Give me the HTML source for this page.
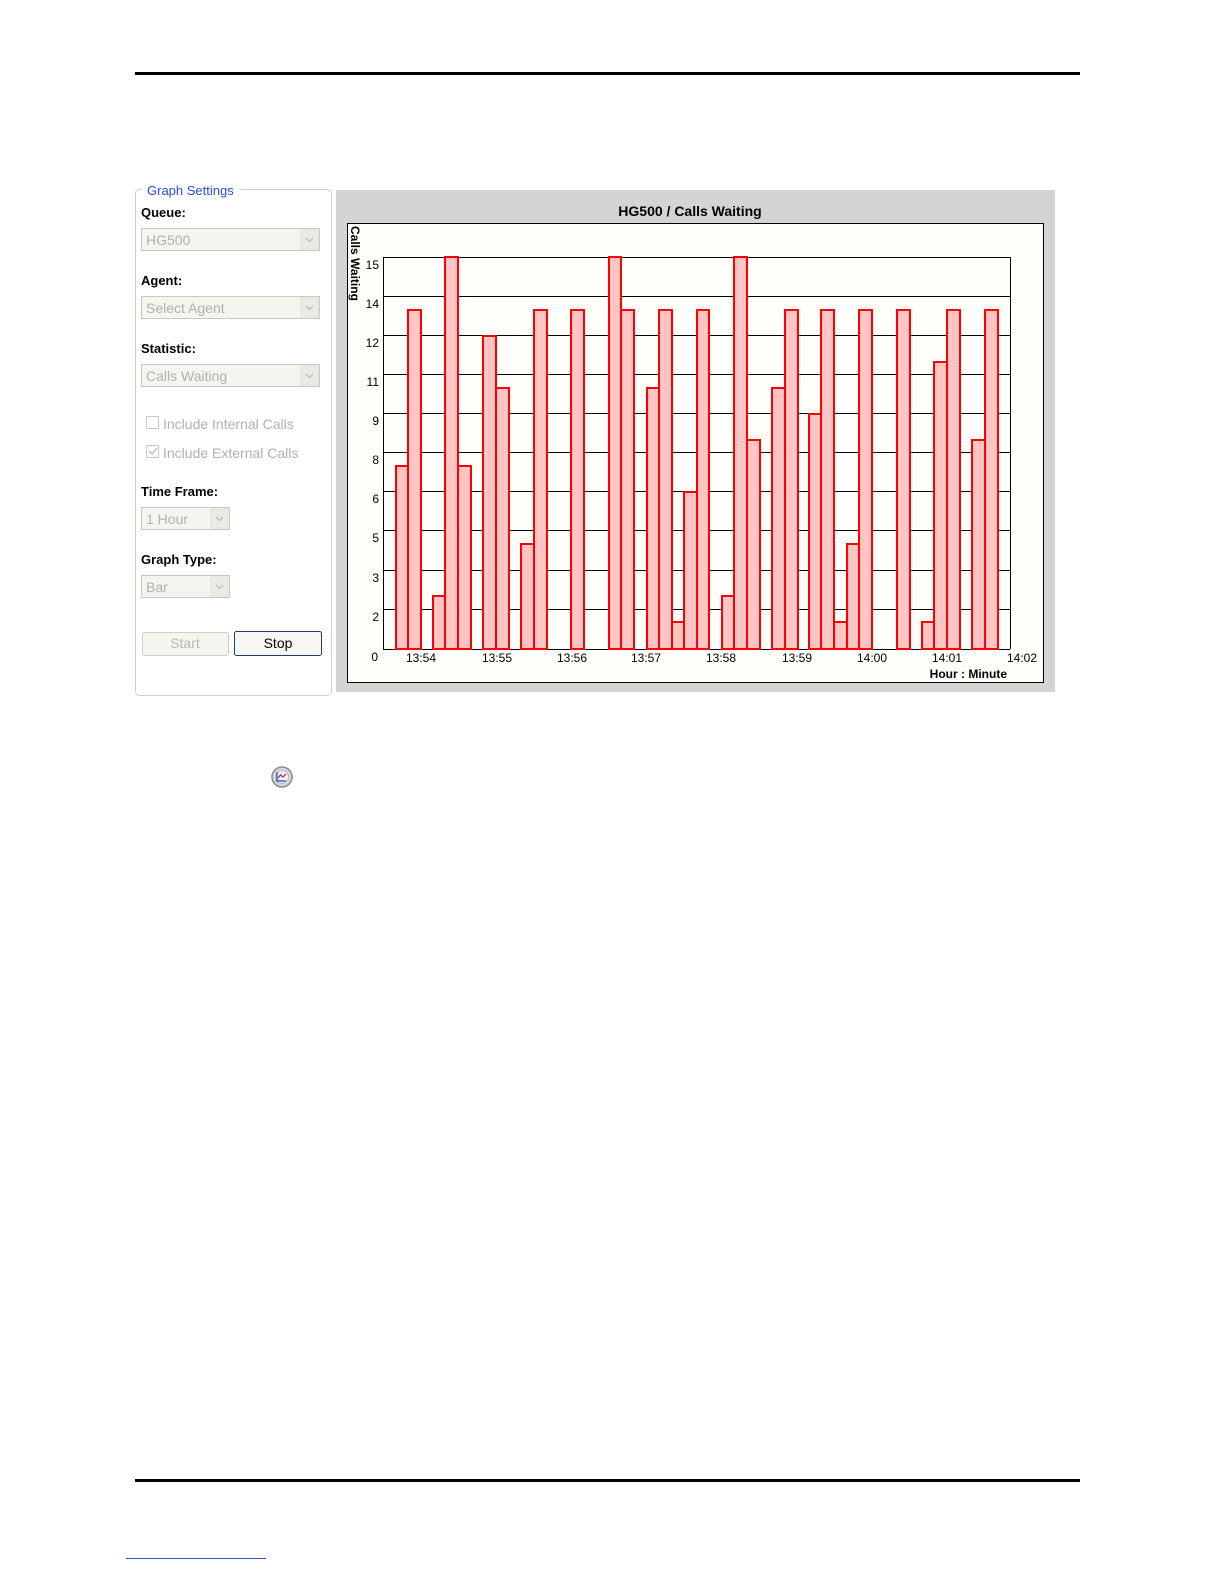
<!DOCTYPE html>
<html><head><meta charset="utf-8"><style>
html,body{margin:0;padding:0;background:#fff;overflow:hidden;width:1224px;height:1584px;}
svg{display:block;font-family:"Liberation Sans",Arial,sans-serif;}
</style></head><body>
<svg width="1224" height="1584" viewBox="0 0 1224 1584" xmlns="http://www.w3.org/2000/svg">
<rect x="135" y="72" width="945" height="3" fill="#000"/>
<rect x="135" y="1479" width="945" height="3" fill="#000"/>
<rect x="126" y="1558" width="140" height="1" fill="#3355cc"/>

<rect x="135.5" y="189.5" width="196" height="506" rx="4" fill="#fff" stroke="#d0d0c8"/>
<rect x="142" y="182" width="98" height="14" fill="#fff"/>
<text x="147" y="195" font-size="13" fill="#2a4fd0">Graph Settings</text>
<g font-size="13" font-weight="bold" fill="#000">
<text x="141" y="217">Queue:</text>
<text x="141" y="285">Agent:</text>
<text x="141" y="353">Statistic:</text>
<text x="141" y="496">Time Frame:</text>
<text x="141" y="564">Graph Type:</text>
</g>
<g fill="#f4f4f0" stroke="#c8c8c0">
<rect x="141.5" y="228.5" width="178" height="22"/>
<rect x="141.5" y="296.5" width="178" height="22"/>
<rect x="141.5" y="364.5" width="178" height="22"/>
<rect x="141.5" y="507.5" width="88" height="22"/>
<rect x="141.5" y="575.5" width="88" height="22"/>
</g>
<g fill="#ebebe6" stroke="#e0e0da">
<rect x="301" y="230" width="17" height="19"/>
<rect x="301" y="298" width="17" height="19"/>
<rect x="301" y="366" width="17" height="19"/>
<rect x="211" y="509" width="17" height="19"/>
<rect x="211" y="577" width="17" height="19"/>
</g>
<g fill="none" stroke="#c0c0c0" stroke-width="1.5">
<path d="M306 238l3.5 3.5 3.5-3.5"/><path d="M306 306l3.5 3.5 3.5-3.5"/><path d="M306 374l3.5 3.5 3.5-3.5"/>
<path d="M216 517l3.5 3.5 3.5-3.5"/><path d="M216 585l3.5 3.5 3.5-3.5"/>
</g>
<g font-size="14" fill="#b0b0b0">
<text x="146" y="245">HG500</text>
<text x="146" y="313">Select Agent</text>
<text x="146" y="381">Calls Waiting</text>
<text x="146" y="524">1 Hour</text>
<text x="146" y="592">Bar</text>
<text x="163" y="429">Include Internal Calls</text>
<text x="163" y="458">Include External Calls</text>
</g>
<rect x="146.5" y="416.5" width="12" height="12" fill="#fff" stroke="#c8c8c8"/>
<rect x="146.5" y="445.5" width="12" height="12" fill="#fff" stroke="#c8c8c8"/>
<path d="M149 451l3 3 5-6" fill="none" stroke="#b8b8b8" stroke-width="1.3"/>
<rect x="142.5" y="632.5" width="86" height="23" rx="2" fill="#f4f4f0" stroke="#d0d0c8"/>
<text x="185" y="648" font-size="14" fill="#b8b8b8" text-anchor="middle">Start</text>
<rect x="234.5" y="631.5" width="87" height="24" rx="2" fill="#f6f6f4" stroke="#1e3c78"/>
<text x="278" y="648" font-size="14" fill="#000" text-anchor="middle">Stop</text>

<rect x="336" y="190" width="719" height="502" fill="#d4d4d4"/>
<rect x="347.5" y="223.5" width="696" height="459" fill="#fefefb" stroke="#000"/>
<text x="690" y="216" font-size="14" font-weight="bold" text-anchor="middle">HG500 / Calls Waiting</text>
<text transform="translate(351,226) rotate(90)" font-size="12" font-weight="bold">Calls Waiting</text>
<g stroke="#000" stroke-width="1">
<line x1="383" y1="257.5" x2="1010" y2="257.5"/>
<line x1="383" y1="296.5" x2="1010" y2="296.5"/>
<line x1="383" y1="335.5" x2="1010" y2="335.5"/>
<line x1="383" y1="374.5" x2="1010" y2="374.5"/>
<line x1="383" y1="413.5" x2="1010" y2="413.5"/>
<line x1="383" y1="452.5" x2="1010" y2="452.5"/>
<line x1="383" y1="491.5" x2="1010" y2="491.5"/>
<line x1="383" y1="530.5" x2="1010" y2="530.5"/>
<line x1="383" y1="570.5" x2="1010" y2="570.5"/>
<line x1="383" y1="609.5" x2="1010" y2="609.5"/>
<line x1="383" y1="649.5" x2="1010" y2="649.5"/>
<line x1="383.5" y1="257" x2="383.5" y2="649"/>
<line x1="1010.5" y1="257" x2="1010.5" y2="649"/>
</g>
<g font-size="12" fill="#000" text-anchor="end">
<text x="379" y="269">15</text><text x="379" y="308">14</text><text x="379" y="347">12</text>
<text x="379" y="386">11</text><text x="379" y="425">9</text><text x="379" y="464">8</text>
<text x="379" y="503">6</text><text x="379" y="542">5</text><text x="379" y="582">3</text>
<text x="379" y="621">2</text><text x="378" y="661">0</text>
</g>
<g fill="#ffc4c4" stroke="#f00" stroke-width="2">
<rect x="396" y="466" width="12" height="183"/>
<rect x="408" y="310" width="13" height="339"/>
<rect x="433" y="596" width="12" height="53"/>
<rect x="445" y="257" width="13" height="392"/>
<rect x="458" y="466" width="13" height="183"/>
<rect x="483" y="336" width="13" height="313"/>
<rect x="496" y="388" width="13" height="261"/>
<rect x="521" y="544" width="13" height="105"/>
<rect x="534" y="310" width="13" height="339"/>
<rect x="571" y="310" width="13" height="339"/>
<rect x="609" y="257" width="12" height="392"/>
<rect x="621" y="310" width="13" height="339"/>
<rect x="647" y="388" width="12" height="261"/>
<rect x="659" y="310" width="13" height="339"/>
<rect x="672" y="622" width="12" height="27"/>
<rect x="684" y="492" width="13" height="157"/>
<rect x="697" y="310" width="12" height="339"/>
<rect x="722" y="596" width="12" height="53"/>
<rect x="734" y="257" width="13" height="392"/>
<rect x="747" y="440" width="13" height="209"/>
<rect x="772" y="388" width="13" height="261"/>
<rect x="785" y="310" width="13" height="339"/>
<rect x="809" y="414" width="12" height="235"/>
<rect x="821" y="310" width="13" height="339"/>
<rect x="834" y="622" width="13" height="27"/>
<rect x="847" y="544" width="12" height="105"/>
<rect x="859" y="310" width="13" height="339"/>
<rect x="897" y="310" width="13" height="339"/>
<rect x="922" y="622" width="12" height="27"/>
<rect x="934" y="362" width="13" height="287"/>
<rect x="947" y="310" width="13" height="339"/>
<rect x="972" y="440" width="13" height="209"/>
<rect x="985" y="310" width="13" height="339"/>
</g>
<g font-size="12" fill="#000" text-anchor="middle">
<text x="421" y="662">13:54</text><text x="497" y="662">13:55</text><text x="572" y="662">13:56</text>
<text x="646" y="662">13:57</text><text x="721" y="662">13:58</text><text x="797" y="662">13:59</text>
<text x="872" y="662">14:00</text><text x="947" y="662">14:01</text><text x="1022" y="662">14:02</text>
</g>
<text x="1007" y="678" font-size="12" font-weight="bold" text-anchor="end">Hour : Minute</text>

<circle cx="282" cy="777" r="10" fill="#d8d8dc" stroke="#8a8a90" stroke-width="1.5"/>
<circle cx="282" cy="777" r="6.5" fill="#eef0f8" stroke="#b0b0c0" stroke-width="0.8"/>
<path d="M277 772v9h9" fill="none" stroke="#2244cc" stroke-width="1.2"/>
<path d="M278 778l2.5-3 2.5 2 3-3" fill="none" stroke="#d02020" stroke-width="1.2"/>
</svg>
</body></html>
